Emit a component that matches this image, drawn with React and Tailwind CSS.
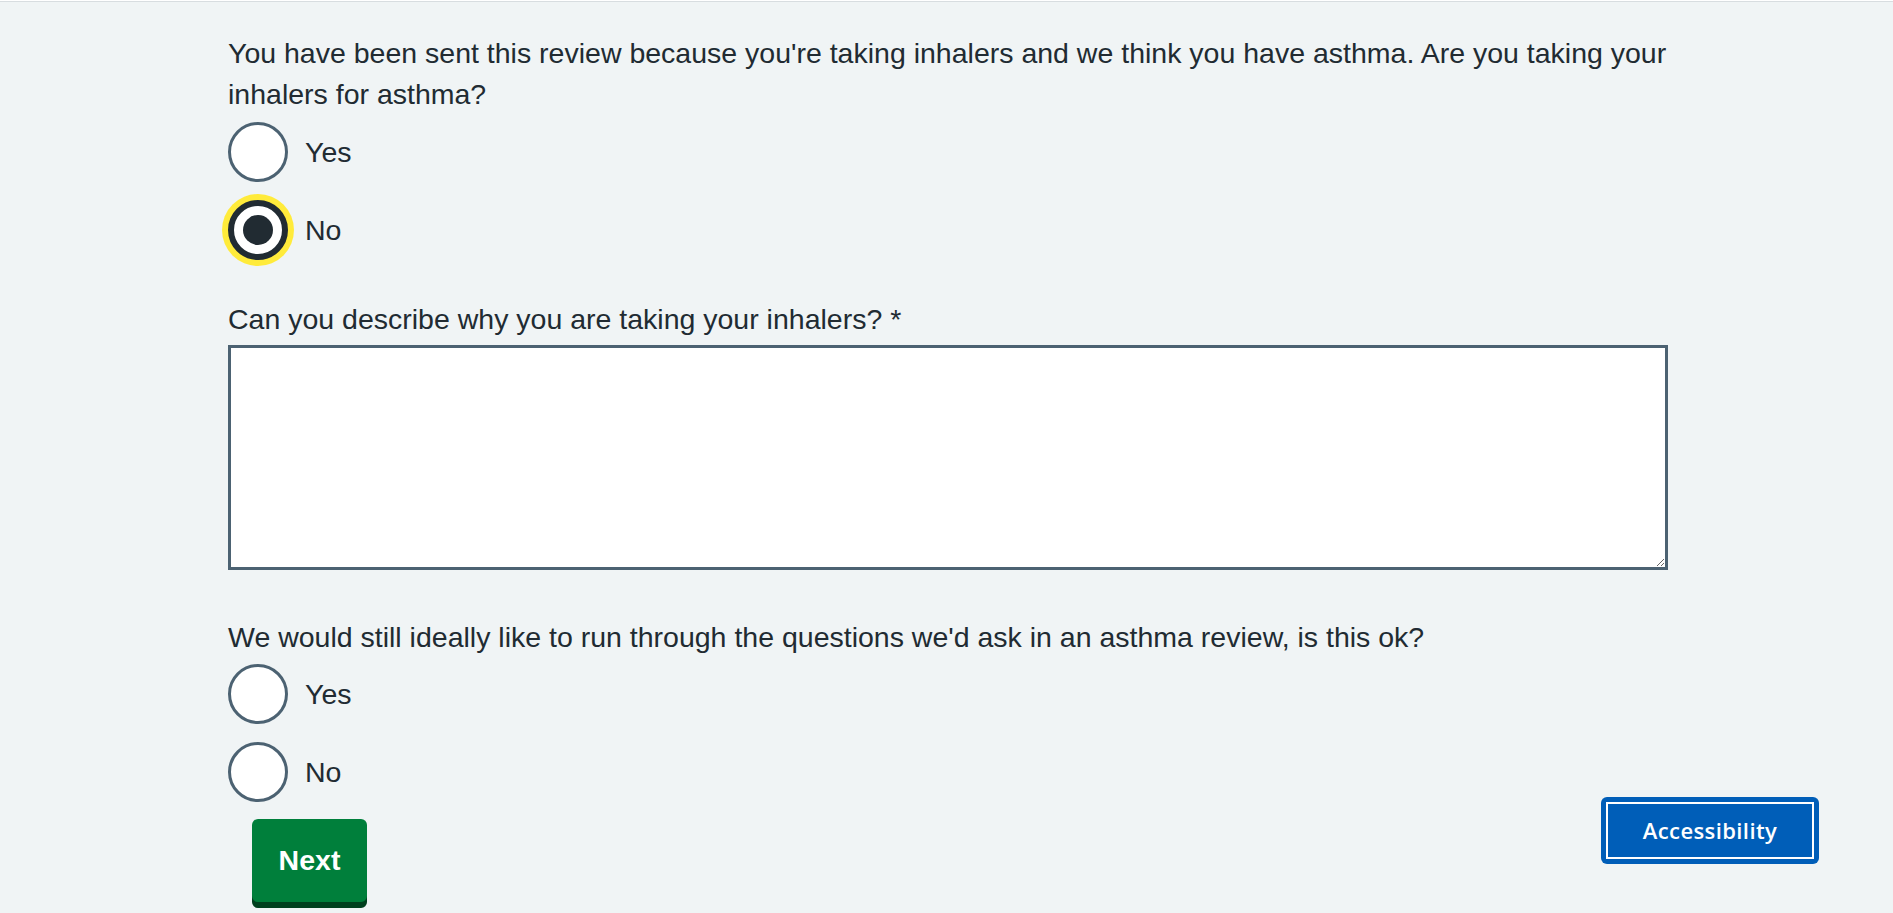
import { useState } from 'react';

const FONT = { fontFamily: '"Liberation Sans", Arial, sans-serif' };

function Radio({ label, checked, focused, onSelect, className = '' }) {
  return (
    <label className={`flex items-center cursor-pointer ${className}`} onClick={onSelect}>
      <span
        className={`relative flex h-[60px] w-[60px] shrink-0 items-center justify-center rounded-full bg-white ${
          focused
            ? 'border-[6px] border-[#212b32] shadow-[0_0_0_6px_#ffeb3b]'
            : 'border-[3px] border-[#4c6272]'
        }`}
      >
        {checked && <span className="h-[30px] w-[30px] rounded-full bg-[#212b32]" />}
      </span>
      <span className="ml-[17px]">{label}</span>
    </label>
  );
}

export default function App() {
  const [first, setFirst] = useState('no');
  const [second, setSecond] = useState(null);

  return (
    <div className="relative h-[913px] w-full overflow-hidden bg-[#f0f4f5] text-[#212b32]" style={FONT}>
      <div className="h-px bg-white" />
      <div className="h-[1px] bg-[#d8dde0]" />

      <main className="ml-[228px] w-[1440px] pt-[31px] text-[28.5px] leading-[41px]">
        {/* Question 1 */}
        <p>
          You have been sent this review because you're taking inhalers and we think you have asthma. Are you taking your inhalers for asthma?
        </p>
        <div className="mt-[7px] flex flex-col gap-[18px]">
          <Radio label="Yes" checked={first === 'yes'} onSelect={() => setFirst('yes')} />
          <Radio label="No" checked={first === 'no'} focused={first === 'no'} onSelect={() => setFirst('no')} />
        </div>

        {/* Free text */}
        <label className="mt-[39px] block">Can you describe why you are taking your inhalers? *</label>
        <textarea className="mt-[5px] block h-[225px] w-[1440px] border-[3px] border-[#4c6272] bg-white p-2 outline-none" />

        {/* Question 2 */}
        <p className="mt-[47px]">
          We would still ideally like to run through the questions we'd ask in an asthma review, is this ok?
        </p>
        <div className="mt-[6px] flex flex-col gap-[18px]">
          <Radio label="Yes" checked={second === 'yes'} onSelect={() => setSecond('yes')} />
          <Radio label="No" checked={second === 'no'} onSelect={() => setSecond('no')} />
        </div>

        <button className="ml-[24px] mt-[17px] flex h-[83px] w-[115px] items-center justify-center rounded-[6px] bg-[#007f3b] font-bold text-white shadow-[0_6px_0_#00401e]">
          Next
        </button>
      </main>

      {/* Floating accessibility widget */}
      <button
        className="absolute left-[1601px] top-[797px] h-[67px] w-[218px] rounded-[6px] bg-[#005eb8] p-[5px]"
        style={{ fontFamily: '"Open Sans", sans-serif' }}
      >
        <span className="flex h-full w-full items-center justify-center border-2 border-white text-[22px] font-semibold tracking-[0.4px] text-white">
          Accessibility
        </span>
      </button>
    </div>
  );
}
